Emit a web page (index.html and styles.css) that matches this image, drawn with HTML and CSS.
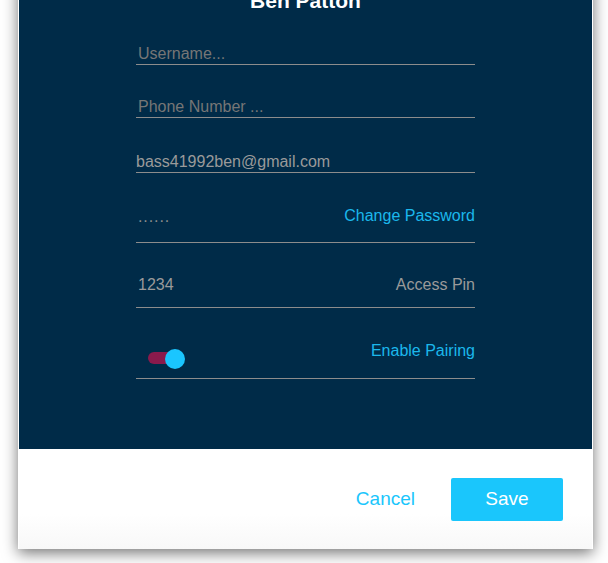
FILE: index.html
```html
<!DOCTYPE html>
<html>
<head>
<meta charset="utf-8">
<link rel="stylesheet" href="styles.css">
</head>
<body>
<div class="dialog">
  <div class="panel">
    <h1 class="title">Ben Patton</h1>
    <div class="form">
      <div class="field f-user"><span class="placeholder">Username...</span></div>
      <div class="field f-phone"><span class="placeholder">Phone Number ...</span></div>
      <div class="field f-email"><span class="value">bass41992ben@gmail.com</span></div>
      <div class="field f-pass"><span class="dots">......</span><span class="link">Change Password</span></div>
      <div class="field f-pin"><span class="value pad">1234</span><span class="value">Access Pin</span></div>
      <div class="field f-toggle">
        <span class="toggle"><span class="track"></span><span class="knob"></span></span>
        <span class="link">Enable Pairing</span>
      </div>
    </div>
  </div>
  <div class="footer">
    <span class="cancel">Cancel</span>
    <span class="save">Save</span>
  </div>
</div>
</body>
</html>
```
FILE: styles.css
```css
html, body {
  margin: 0;
  padding: 0;
  background: #ffffff;
}
body {
  font-family: "Liberation Sans", Arial, sans-serif;
  overflow: hidden;
  height: 563px;
}
.dialog {
  margin: -36px 0 0 18px;
  width: 573px;
  padding: 0 1px;
  background: #ffffff;
  box-shadow: 0 4px 14px rgba(0, 0, 0, 0.55);
}
.panel {
  background: #002b48;
  padding: 25px 0 70px;
}
.title {
  margin: 0;
  font-size: 21px;
  line-height: 24px;
  font-weight: bold;
  color: #ffffff;
  text-align: center;
}
.form {
  width: 339px;
  margin: 32px auto 0;
  display: flex;
  flex-direction: column;
}
.field {
  display: flex;
  justify-content: space-between;
  align-items: baseline;
  border-bottom: 1px solid #8c8c8c;
  font-size: 16px;
  line-height: 18px;
  padding-bottom: 1px;
}
.f-phone { margin-top: 33px; }
.f-email { margin-top: 35px; }
.f-pass { margin-top: 34px; padding-bottom: 17px; }
.f-pin { margin-top: 33px; padding-bottom: 13px; }
.f-toggle { margin-top: 34px; padding-bottom: 9px; align-items: flex-start; }
.placeholder {
  color: #767676;
  padding-left: 2px;
}
.value {
  color: #9a9a9a;
}
.value.pad { padding-left: 2px; }
.dots {
  color: #8c8c8c;
  padding-left: 2px;
  letter-spacing: 0.9px;
  position: relative;
  top: 1px;
}
.link {
  color: #1bb8ec;
}
.toggle {
  position: relative;
  width: 37px;
  height: 20px;
  margin: 7px 0 0 12px;
}
.track {
  position: absolute;
  left: 0;
  top: 3px;
  width: 30px;
  height: 12px;
  border-radius: 6px;
  background: #8a1a4c;
}
.knob {
  position: absolute;
  left: 17px;
  top: 0;
  width: 20px;
  height: 20px;
  border-radius: 50%;
  background: #1ac6ff;
}
.footer {
  height: 100px;
  display: flex;
  justify-content: flex-end;
  align-items: center;
  padding-right: 29px;
  background: linear-gradient(#ffffff 65%, #f8f8f8);
}
.cancel {
  color: #1ac6fc;
  font-size: 19px;
  margin-right: 36px;
}
.save {
  width: 112px;
  height: 43px;
  display: flex;
  align-items: center;
  justify-content: center;
  background: #1ac6fc;
  color: #ffffff;
  font-size: 19px;
  border-radius: 2px;
}
```
